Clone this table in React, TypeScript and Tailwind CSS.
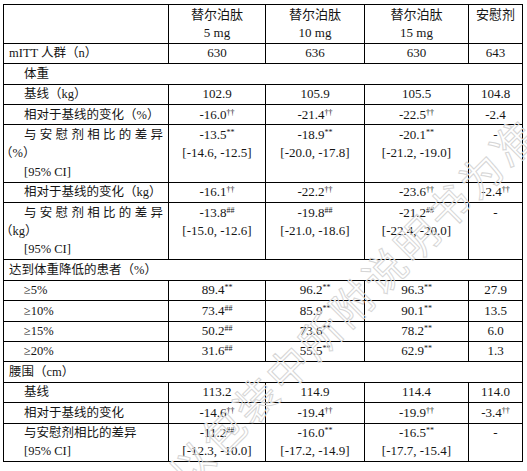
import type { ReactNode } from 'react';

type Cell = { v: string; s?: string; ci?: string };
type Row =
  | { kind: 'section'; label: string; indent?: boolean }
  | { kind: 'data'; label: ReactNode; cells: Cell[] };

const c = (v: string, s?: string, ci?: string): Cell => ({ v, s, ci });

// 标签里的一行
const L = ({ children, indent }: { children: ReactNode; indent?: boolean }) => (
  <div className={`whitespace-nowrap pr-[3px] ${indent ? 'pl-[20px]' : 'pl-[5px]'}`}>{children}</div>
);

// 两端对齐的第一行
const J = ({ children }: { children: ReactNode }) => (
  <div className="pl-[20px] pr-[5px] text-justify [text-align-last:justify]">{children}</div>
);

// 折行后的括号（全角括号左侧留白，往左挪一点）
const W = ({ children }: { children: ReactNode }) => (
  <div className="-ml-[4px] whitespace-nowrap">{children}</div>
);

const rows: Row[] = [
  { kind: 'data', label: <L>mITT 人群（n）</L>, cells: [c('630'), c('636'), c('630'), c('643')] },
  { kind: 'section', label: '体重', indent: true },
  { kind: 'data', label: <L indent>基线（kg）</L>, cells: [c('102.9'), c('105.9'), c('105.5'), c('104.8')] },
  {
    kind: 'data',
    label: <L indent>相对于基线的变化（%）</L>,
    cells: [c('-16.0', '††'), c('-21.4', '††'), c('-22.5', '††'), c('-2.4')],
  },
  {
    kind: 'data',
    label: (
      <>
        <J>与安慰剂相比的差异</J>
        <W>（%）</W>
        <L indent>[95% CI]</L>
      </>
    ),
    cells: [
      c('-13.5', '**', '[-14.6, -12.5]'),
      c('-18.9', '**', '[-20.0, -17.8]'),
      c('-20.1', '**', '[-21.2, -19.0]'),
      c('-'),
    ],
  },
  {
    kind: 'data',
    label: <L indent>相对于基线的变化（kg）</L>,
    cells: [c('-16.1', '††'), c('-22.2', '††'), c('-23.6', '††'), c('-2.4', '††')],
  },
  {
    kind: 'data',
    label: (
      <>
        <J>与安慰剂相比的差异</J>
        <W>（kg）</W>
        <L indent>[95% CI]</L>
      </>
    ),
    cells: [
      c('-13.8', '##', '[-15.0, -12.6]'),
      c('-19.8', '##', '[-21.0, -18.6]'),
      c('-21.2', '##', '[-22.4, -20.0]'),
      c('-'),
    ],
  },
  { kind: 'section', label: '达到体重降低的患者（%）' },
  { kind: 'data', label: <L indent>≥5%</L>, cells: [c('89.4', '**'), c('96.2', '**'), c('96.3', '**'), c('27.9')] },
  { kind: 'data', label: <L indent>≥10%</L>, cells: [c('73.4', '##'), c('85.9', '**'), c('90.1', '**'), c('13.5')] },
  { kind: 'data', label: <L indent>≥15%</L>, cells: [c('50.2', '##'), c('73.6', '**'), c('78.2', '**'), c('6.0')] },
  { kind: 'data', label: <L indent>≥20%</L>, cells: [c('31.6', '##'), c('55.5', '**'), c('62.9', '**'), c('1.3')] },
  { kind: 'section', label: '腰围（cm）' },
  { kind: 'data', label: <L indent>基线</L>, cells: [c('113.2'), c('114.9'), c('114.4'), c('114.0')] },
  {
    kind: 'data',
    label: <L indent>相对于基线的变化</L>,
    cells: [c('-14.6', '††'), c('-19.4', '††'), c('-19.9', '††'), c('-3.4', '††')],
  },
  {
    kind: 'data',
    label: (
      <>
        <L indent>与安慰剂相比的差异</L>
        <L indent>[95% CI]</L>
      </>
    ),
    cells: [
      c('-11.2', '##', '[-12.3, -10.0]'),
      c('-16.0', '**', '[-17.2, -14.9]'),
      c('-16.5', '**', '[-17.7, -15.4]'),
      c('-'),
    ],
  },
];

const headers = [['替尔泊肽', '5 mg'], ['替尔泊肽', '10 mg'], ['替尔泊肽', '15 mg'], ['安慰剂']];

const td = 'border border-black px-0 py-[0.5px] align-top';

export default function App() {
  return (
    <div className="relative h-[471px] w-[527px] overflow-hidden bg-white pl-[3px] pt-[4px] font-['Liberation_Serif','Noto_Sans_CJK_SC',serif] text-[#151515]">
      <table className="w-[519px] table-fixed border-collapse border border-black text-[13px] leading-[18.4px]">
        <colgroup>
          <col className="w-[165px]" />
          <col className="w-[97px]" />
          <col className="w-[99px]" />
          <col className="w-[104px]" />
          <col className="w-[54px]" />
        </colgroup>
        <tbody>
          <tr>
            <td className={td} />
            {headers.map((h, i) => (
              <td key={i} className={`${td} text-center font-normal`}>
                {h.map((line) => (
                  <div key={line}>{line}</div>
                ))}
              </td>
            ))}
          </tr>
          {rows.map((row, i) =>
            row.kind === 'section' ? (
              <tr key={i}>
                <td colSpan={5} className={`${td} text-[12.5px]`}>
                  <L indent={row.indent}>{row.label}</L>
                </td>
              </tr>
            ) : (
              <tr key={i}>
                <td className={`${td} text-[12.5px]`}>{row.label}</td>
                {row.cells.map((cell, j) => (
                  <td key={j} className={`${td} whitespace-nowrap text-center`}>
                    <div>
                      {cell.v}
                      {cell.s && <sup className="text-[8px]">{cell.s}</sup>}
                    </div>
                    {cell.ci && <div>{cell.ci}</div>}
                  </td>
                ))}
              </tr>
            )
          )}
        </tbody>
      </table>

      {/* 水印 */}
      <span className="pointer-events-none absolute left-[175px] top-[457px] origin-left -rotate-45 whitespace-nowrap font-['Noto_Sans_CJK_SC',sans-serif] text-[42px] leading-[42px] tracking-[3.5px] text-transparent [-webkit-text-stroke:1px_#d6d6d6]">
        以包装中所附说明书为准
      </span>
    </div>
  );
}
